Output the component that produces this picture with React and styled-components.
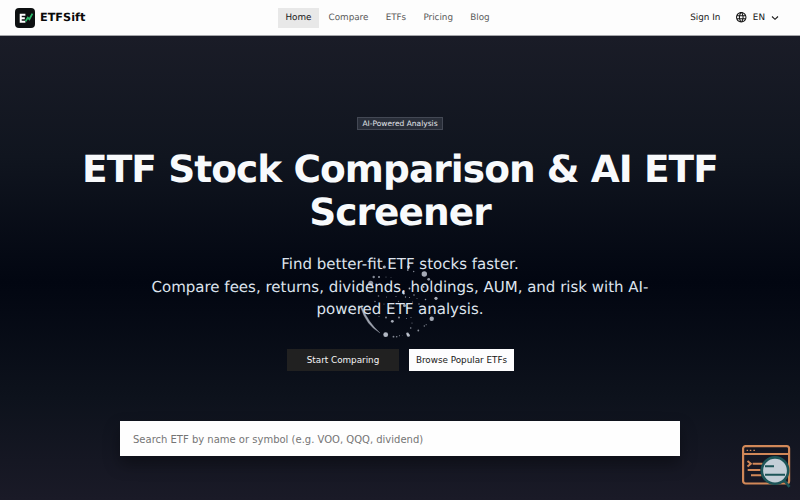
import React from "react";
import styled, { createGlobalStyle } from "styled-components";
import { MdLanguage } from "react-icons/md";

const Global = createGlobalStyle`
  * { box-sizing: border-box; }
  body { margin: 0; font-family: "DejaVu Sans", sans-serif; text-rendering: geometricPrecision; overflow: hidden; }
  button, input { font-family: inherit; border: 0; margin: 0; border-radius: 0; }
`;
const Page = styled.div`
  width: 800px; height: 500px; display: flex; flex-direction: column; overflow: hidden;
`;
const Header = styled.header`
  height: 36px; flex: none; background: #fdfdfd; border-bottom: 1px solid #a5a6aa;
  display: grid; grid-template-columns: 278px 1fr auto; align-items: center; padding-right: 21px;
`;
const Brand = styled.a`
  display: flex; align-items: center; gap: 5px; padding-left: 15px;
  font-size: 11.25px; font-weight: 700; color: #0a0a0a;
  svg { display: block; }
`;
const Nav = styled.nav`display: flex; align-items: center; gap: 2.4px;`;
const NavItem = styled.a`
  height: 20px; padding: 0 7.4px; display: flex; align-items: center; font-size: 8.8px;
  color: ${(p) => (p.$active ? "#171717" : "#5a5a5a")};
  background: ${(p) => (p.$active ? "#e8e8e8" : "transparent")};
`;
const Actions = styled.div`display: flex; align-items: center; gap: 15px; font-size: 8.8px; color: #171717;`;
const Language = styled.div`display: flex; align-items: center; gap: 5px; svg { display: block; }`;
const Hero = styled.main`
  position: relative; flex: 1; display: flex; flex-direction: column; align-items: center;
  background: linear-gradient(180deg, #1a1c27 0%, #10151f 26%, #020611 53%, #0d121c 78%, #1a1a27 100%);
`;
const Badge = styled.span`
  margin-top: 81px; height: 13px; width: 86px; display: flex; align-items: center; justify-content: center;
  border: 1px solid #434854; background: #292e39; color: #e2e5eb; font-size: 7.5px; white-space: nowrap;
`;
const Title = styled.h1`
  margin: 18px 0 0; width: 680px; text-align: center; color: #f8fafc;
  font-size: 37.5px; line-height: 43.1px; font-weight: 700; letter-spacing: -0.9375px;
`;
const Lead = styled.p`
  margin: 19.3px 0 0; width: 512px; text-align: center; color: #dde3ed; font-size: 15px; line-height: 22.5px;
`;
const Buttons = styled.div`display: flex; gap: 10px; margin-top: 28px;`;
const Button = styled.button`
  height: 22px; width: ${(p) => (p.$light ? 105 : 112)}px; padding: 0 0 0 1px; font-size: 8.8px; white-space: nowrap;
  color: ${(p) => (p.$light ? "#171717" : "#f5f5f5")};
  background: ${(p) => (p.$light ? "#fdfdfe" : "#212121")};
`;
const Search = styled.input`
  margin-top: 50px; width: 560px; height: 35px; padding: 2px 13px 0; background: #fefefe; font-size: 10px;
  box-shadow: 0 8px 16px rgba(0, 0, 0, 0.35); outline: 0;
  &::placeholder { color: #757575; opacity: 1; }
`;
const Particles = styled.svg`position: absolute; left: 355px; top: 222px; pointer-events: none;`;
const Widget = styled.svg`position: absolute; left: 740px; top: 407px;`;

// x, y, radius, opacity
const dots = [
  [29.3, 9, 1.6, 0.75], [69.3, 16, 2.7, 0.75], [73.7, 21.3, 1.4, 0.65], [15.7, 25.3, 2.5, 0.65],
  [81, 40.3, 1.6, 0.75], [76.7, 60.7, 2.2, 0.75], [30.7, 76.7, 2.4, 0.8], [37.3, 63.3, 1.4, 0.75],
  [18.7, 19, 1.2, 0.6], [24, 19, 1, 0.7], [48.3, 34, 1.2, 0.9], [48.8, 35.5, 1, 0.9], [52.5, 75.8, 1.3, 0.8], [53.4, 77.3, 1.5, 0.8],
  [53.5, 8.8, 1.4, 0.8], [52.8, 12, 0.9, 0.6], [58.7, 13.5, 0.7, 0.6],
  [31, 19, 0.5, 0.5], [36, 19.5, 0.4, 0.5], [54.5, 30.5, 0.9, 0.8], [68.5, 29, 1, 0.7],
  [23.5, 38, 0.8, 0.5], [20, 43.5, 0.8, 0.5], [31.5, 39, 0.5, 0.5], [41, 38.5, 0.6, 0.5],
  [43.5, 43.5, 0.7, 0.5], [50.5, 39, 0.7, 0.6], [54.5, 39.5, 0.6, 0.6], [59, 37, 0.8, 0.6],
  [62, 40.5, 0.5, 0.5], [70.5, 41.5, 0.8, 0.6], [57.5, 44, 0.6, 0.5], [64, 46, 0.8, 0.5],
  [31, 59.5, 0.9, 0.6], [24, 58.5, 0.6, 0.5], [44, 59.5, 1, 0.6], [49.5, 47.5, 1.5, 0.7],
  [51.5, 60.5, 0.6, 0.5], [56, 59.5, 0.6, 0.5], [29, 46, 0.5, 0.5], [36, 48, 0.6, 0.5],
  [66.5, 48.5, 0.8, 0.5], [57, 65, 0.6, 0.5], [55.7, 70, 0.8, 0.6],
  [38.5, 78.7, 0.9, 0.6], [41.7, 78.7, 0.8, 0.6], [44.5, 77.7, 0.6, 0.5], [47.5, 77.7, 0.4, 0.4],
  [63.3, 72.5, 0.9, 0.6], [69.3, 68, 0.7, 0.6], [71.2, 66.7, 0.6, 0.5],
];

export default function App() {
  return (
    <Page>
      <Global />
      <Header>
        <Brand>
          <svg width="20" height="20" viewBox="0 0 20 20">
            <rect width="20" height="20" rx="4" fill="#0d1011" />
            <path d="M10.4 6.7H5.7V13.8H10.4M5.7 10.2H9.8" stroke="#fff" strokeWidth="2" fill="none" />
            <path d="M10.6 13.4L12.8 9.6L14.4 11.2L17.4 5.6" stroke="#2bb969" strokeWidth="1.8" fill="none" />
          </svg>
          ETFSift
        </Brand>
        <Nav>
          <NavItem $active>Home</NavItem>
          <NavItem>Compare</NavItem>
          <NavItem>ETFs</NavItem>
          <NavItem>Pricing</NavItem>
          <NavItem>Blog</NavItem>
        </Nav>
        <Actions>
          <span>Sign In</span>
          <Language>
            <MdLanguage size={12.5} />
            EN
            <svg width="9" height="8" viewBox="0 0 9 8" fill="none" stroke="#171717" strokeWidth="1.1"><path d="M2 2.5L5 5.3L8 2.5" /></svg>
          </Language>
        </Actions>
      </Header>
      <Hero>
        <Badge>AI-Powered Analysis</Badge>
        <Title>ETF Stock Comparison &amp; AI ETF Screener</Title>
        <Lead>Find better-fit ETF stocks faster.<br />Compare fees, returns, dividends, holdings, AUM, and risk with AI-powered ETF analysis.</Lead>
        <Buttons>
          <Button>Start Comparing</Button>
          <Button $light>Browse Popular ETFs</Button>
        </Buttons>
        <Search placeholder="Search ETF by name or symbol (e.g. VOO, QQQ, dividend)" />
        <Particles width="90" height="84" viewBox="0 0 90 84" fill="#dce2ee">
          {dots.map(([x, y, r, o], i) => <circle key={i} cx={x} cy={y} r={r} opacity={o} />)}
          <path d="M5.5 49Q11 67 25 75Q13 64 7 49Z" stroke="#dce2ee" strokeWidth="0.3" opacity="0.7" />
        </Particles>
        <Widget width="54" height="54" viewBox="0 0 54 54" fill="none" stroke="#d18858" strokeWidth="2.2">
          <rect x="3.1" y="3.1" width="46" height="37.4" rx="2.5" />
          <path d="M3 11H49" strokeWidth="1.8" />
          <path d="M6.6 7.4H8.1M9.8 7.4H11.3M13.4 7.4H14.9" strokeWidth="1.4" />
          <path d="M7.5 18L10.8 20.7L7.5 23.5M12.7 20.7H22.7M7.7 27H20.5M11 32.3H21.5" strokeWidth="2" />
          <circle cx="35" cy="27.6" r="13.2" fill="#c4cfd8" stroke="#1d5558" strokeWidth="2.6" />
          <path d="M25 23.3H34M25 31.8H45" stroke="#1d5558" strokeWidth="2.1" />
          <path d="M44.3 37.5L49.5 43.8" stroke="#1d5558" strokeWidth="2.6" />
        </Widget>
      </Hero>
    </Page>
  );
}
